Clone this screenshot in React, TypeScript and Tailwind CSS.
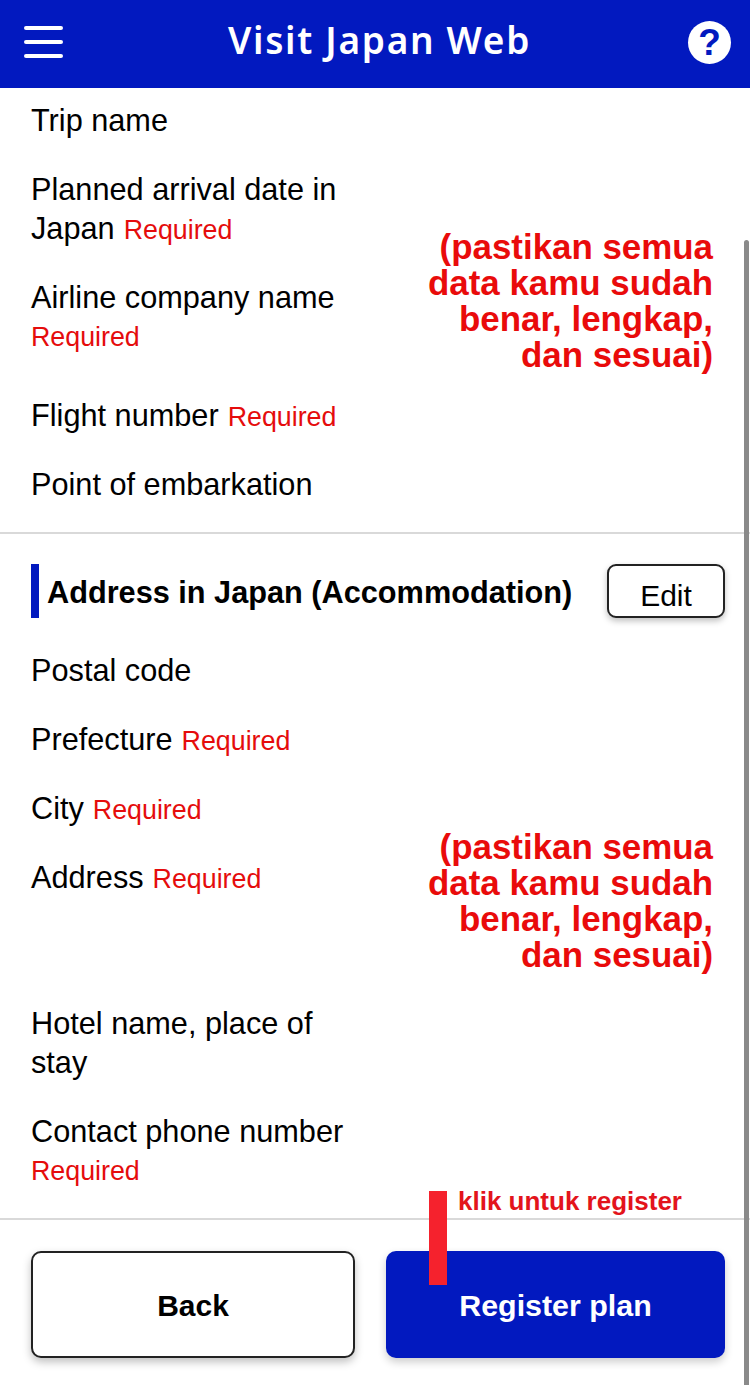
import React from "react";

const Row = ({ first, label, required, blockReq, className = "" }: { first?: string; label: string; required?: boolean; blockReq?: boolean; className?: string }) => (
  <div className={`w-[320px] text-[30.7px] leading-[39px] text-black ${className}`}>
    {first && <div>{first}</div>}
    {label}
    {required && !blockReq && <span className="text-[26.8px] leading-none text-[#e50c0c] ml-[9px]">Required</span>}
    {blockReq && <div className="text-[26.8px] text-[#e50c0c] mt-[1px] mb-[9px]">Required</div>}
  </div>
);

const Note = ({ className }: { className: string }) => (
  <div className={`absolute right-[37px] text-right text-[34.9px] leading-[36px] font-bold text-[#e90b0b] ${className}`}>
    (pastikan semua
    <br />
    data kamu sudah
    <br />
    benar, lengkap,
    <br />
    dan sesuai)
  </div>
);

const App = () => {
  return (
    <div className="relative w-[750px] h-[1385px] overflow-hidden bg-white font-['Liberation_Sans',Arial,sans-serif]">
      {/* Header */}
      <header className="h-[88px] bg-[#0219bf] flex items-center justify-between pl-[24px] pr-[19px] pb-[4px]">
        <div className="flex flex-col gap-[10px] w-[39px]">
          <span className="h-[4px] rounded-full bg-white" />
          <span className="h-[4px] rounded-full bg-white" />
          <span className="h-[4px] rounded-full bg-white" />
        </div>
        <h1 className="font-['Noto_Sans',sans-serif] text-[37px] leading-[50px] font-semibold tracking-[1.7px] text-white -mt-[4px] ml-[8px]">Visit Japan Web</h1>
        <div className="w-[43px] h-[43px] rounded-full bg-white flex items-center justify-center text-[#0219bf] text-[37px] font-bold leading-none">?</div>
      </header>

      {/* Flight info */}
      <section className="pl-[31px] pt-[13px] flex flex-col gap-[30px] h-[446px] border-b-2 border-[#d9d9d9]">
        <Row label="Trip name" />
        <Row first="Planned arrival date in" label="Japan" required />
        <Row label="Airline company name" blockReq />
        <Row label="Flight number" required />
        <Row label="Point of embarkation" />
      </section>

      {/* Address */}
      <section className="h-[686px] border-b-2 border-[#d9d9d9] pl-[31px] pr-[25px] pt-[30px]">
        <div className="flex items-center justify-between h-[54px]">
          <h2 className="border-l-[8px] border-[#0219bf] pl-[8px] pt-[5px] h-[54px] flex items-center text-[30.7px] font-bold text-black">
            Address in Japan (Accommodation)
          </h2>
          <button className="w-[118px] h-[54px] pt-[7px] rounded-[9px] border-2 border-[#222] bg-white text-[30px] text-black shadow-[0_3px_6px_rgba(0,0,0,0.25)]">
            Edit
          </button>
        </div>
        <div className="flex flex-col gap-[30px] mt-[33px]">
          <Row label="Postal code" />
          <Row label="Prefecture" required />
          <Row label="City" required />
          <Row label="Address" required className="h-[116px]" />
          <Row first="Hotel name, place of" label="stay" />
          <Row label="Contact phone number" blockReq />
        </div>
      </section>

      {/* Footer */}
      <footer className="flex justify-between pl-[31px] pr-[25px] pt-[31px]">
        <button className="w-[324px] h-[107px] pt-[2px] rounded-[10px] border-2 border-[#222] bg-white text-[30px] font-bold text-black shadow-[0_4px_8px_rgba(0,0,0,0.25)]">
          Back
        </button>
        <button className="w-[339px] h-[107px] pt-[3px] rounded-[10px] bg-[#0219bf] text-[30.4px] font-bold text-white shadow-[0_4px_8px_rgba(0,0,0,0.2)]">
          Register plan
        </button>
      </footer>

      {/* Annotations */}
      <div className="absolute right-[1px] top-[240px] bottom-0 w-[5px] rounded-t-full bg-[#8a8a8a]" />
      <Note className="top-[229px]" />
      <Note className="top-[829px]" />
      <div className="absolute left-[429px] top-[1191px] w-[18px] h-[94px] bg-[#f5222d]" />
      <div className="absolute left-[458px] top-[1186px] text-[26px] leading-[30px] font-bold text-[#e3141c]">klik untuk register</div>
    </div>
  );
};

export default App;
